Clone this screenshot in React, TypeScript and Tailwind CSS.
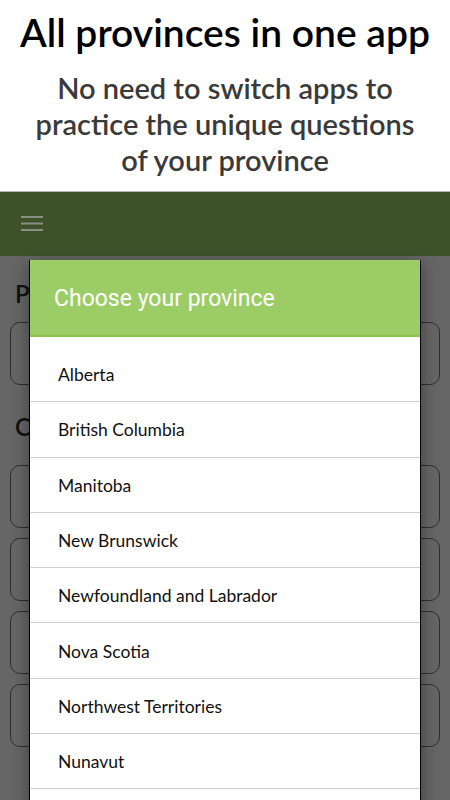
import React from 'react';

const provinces = [
  'Alberta',
  'British Columbia',
  'Manitoba',
  'New Brunswick',
  'Newfoundland and Labrador',
  'Nova Scotia',
  'Northwest Territories',
  'Nunavut',
  'Ontario',
];

const Hamburger = () => (
  <svg width="22" height="16" viewBox="0 0 22 16" className="text-[#8a8f86]">
    <rect x="0" y="0" width="22" height="2" fill="currentColor" />
    <rect x="0" y="6.5" width="22" height="2" fill="currentColor" />
    <rect x="0" y="13" width="22" height="2" fill="currentColor" />
  </svg>
);

const App = () => {
  return (
    <div className="relative h-[800px] w-[450px] overflow-hidden bg-white font-['Lato',sans-serif]">
      {/* promo heading */}
      <div className="flex h-[192px] flex-col items-center border-b border-[#b5b5b5]">
        <h1 className="mt-[7px] text-[39px] font-semibold leading-[50px] text-black">All provinces in one app</h1>
        <p className="mt-[13px] text-center text-[29px] font-semibold leading-[36px] text-[#3a3a3a]">
          No need to switch apps to
          <br />
          practice the unique questions
          <br />
          of your province
        </p>
      </div>

      {/* app bar */}
      <div className="flex h-[64px] items-center bg-[#3d5229] px-[21px]">
        <Hamburger />
      </div>

      {/* dimmed app content */}
      <div className="h-[544px] bg-[#666666] px-[10px]">
        <h2 className="pt-[22px] pl-[5px] text-[24px] font-semibold leading-[32px] text-[#111]">Province</h2>
        <div className="mt-[12px] h-[63px] rounded-[10px] border border-[#2e2e2e]" />
        <h2 className="mt-[26px] pl-[5px] text-[24px] font-semibold leading-[32px] text-[#111]">Categories</h2>
        <div className="mt-[22px] flex flex-col gap-[10px]">
          <div className="h-[63px] rounded-[10px] border border-[#2e2e2e]" />
          <div className="h-[63px] rounded-[10px] border border-[#2e2e2e]" />
          <div className="h-[63px] rounded-[10px] border border-[#2e2e2e]" />
          <div className="h-[63px] rounded-[10px] border border-[#2e2e2e]" />
        </div>
      </div>

      {/* dialog */}
      <div className="absolute left-[29px] top-[260px] w-[392px] border-x border-black bg-white shadow-[0_4px_16px_rgba(0,0,0,0.4)]">
        <div className="flex h-[77px] items-center border-b-2 border-[#8bc34a] bg-[#9ccc65] pb-[0px] pt-[3px] pl-[24px] font-['Roboto',sans-serif] text-[23px] text-white">
          Choose your province
        </div>
        <ul className="pt-[10px]">
          {provinces.map((p) => (
            <li
              key={p}
              className="flex h-[55.3px] items-center border-b border-[#cfcfcf] pl-[28px] pt-[2px] text-[17.5px] text-[#111]"
            >
              {p}
            </li>
          ))}
        </ul>
      </div>
    </div>
  );
};

export default App;
